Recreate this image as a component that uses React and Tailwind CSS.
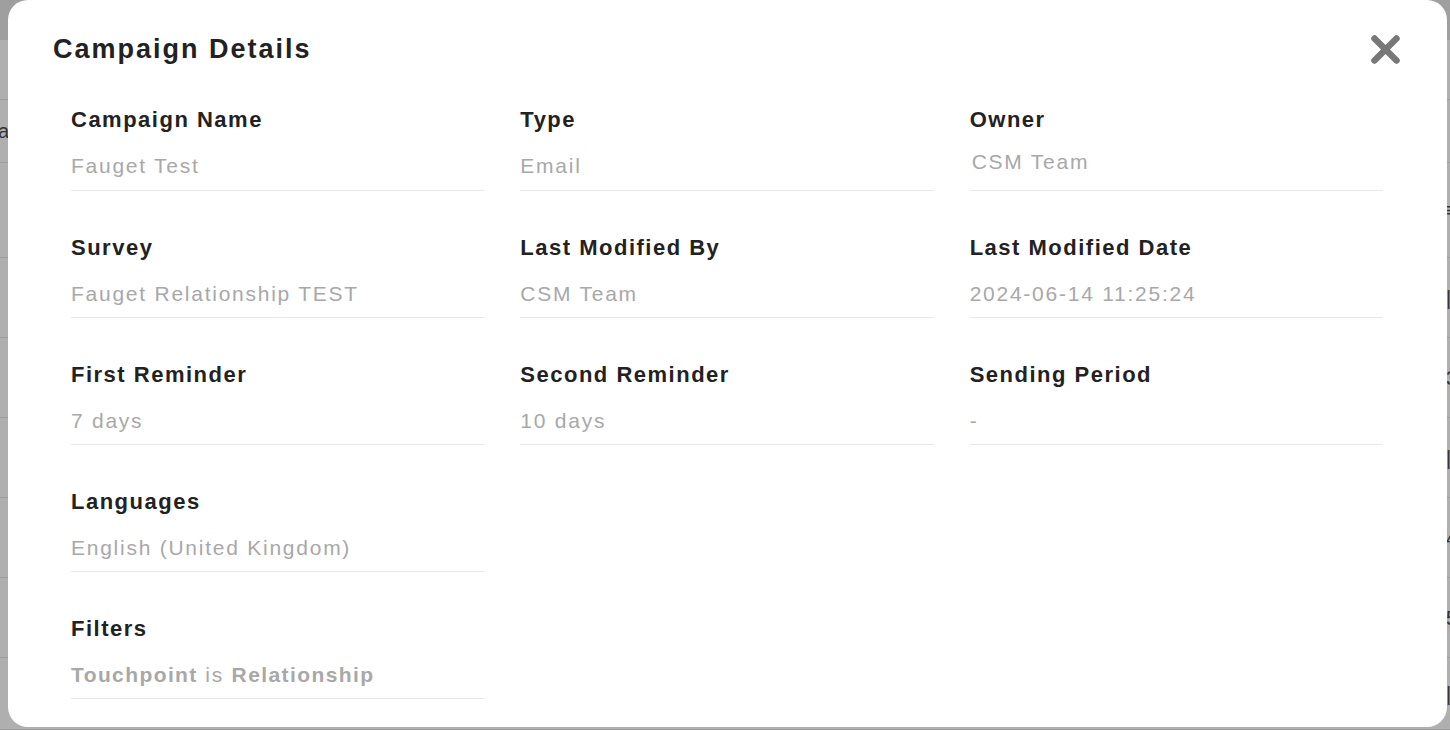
const fields = [
  { label: 'Campaign Name', value: 'Fauget Test' },
  { label: 'Type', value: 'Email' },
  { label: 'Owner', value: 'CSM Team', nudge: true },
  { label: 'Survey', value: 'Fauget Relationship TEST' },
  { label: 'Last Modified By', value: 'CSM Team' },
  { label: 'Last Modified Date', value: '2024-06-14 11:25:24' },
  { label: 'First Reminder', value: '7 days' },
  { label: 'Second Reminder', value: '10 days' },
  { label: 'Sending Period', value: '-' },
  { label: 'Languages', value: 'English (United Kingdom)' },
];

// rows of the page table that peeks out behind the dialog
const bgRows = [
  { h: 'h-[60px]', left: '', right: '' },
  { h: 'h-[63px]', left: 'pa', right: '' },
  { h: 'h-[95px]', left: '', right: '≡' },
  { h: 'h-[80px]', left: '', right: '|' },
  { h: 'h-[80px]', left: '', right: '3' },
  { h: 'h-[80px]', left: '', right: '|' },
  { h: 'h-[80px]', left: '', right: '4' },
  { h: 'h-[80px]', left: '', right: '5' },
  { h: 'h-[72px]', left: '', right: '|' },
];

function Field({ label, value, nudge }) {
  return (
    <div className="flex flex-col border-b border-[#e8e8e8] pb-[12px]">
      <div className="text-[22px] leading-[24px] font-bold tracking-[1.5px] text-[#222]">{label}</div>
      <div
        className={
          nudge
            ? 'mt-[18px] mb-[4px] pl-[2px] text-[21px] leading-[24px] tracking-[1.75px] text-[#a8a8a8]'
            : 'mt-[22px] -mb-[1px] text-[21px] leading-[24px] tracking-[1.75px] text-[#a8a8a8]'
        }
      >
        {value}
      </div>
    </div>
  );
}

export default function App() {
  return (
    <div
      className="relative h-[730px] w-full overflow-hidden bg-[#afafaf]"
      style={{ fontFamily: '"Liberation Sans", Arial, sans-serif' }}
    >
      {/* page behind the overlay */}
      <div className="flex flex-col">
        <div className="h-[40px] bg-[#9f9f9f]" />
        {bgRows.map((r, i) => (
          <div key={i} className={`${r.h} flex items-center justify-between border-b border-[#9d9d9d] text-[20px] text-[#333]`}>
            <span className="-ml-[13px] w-[21px] overflow-hidden whitespace-nowrap">{r.left}</span>
            <span className="w-[4px] overflow-hidden whitespace-nowrap">{r.right}</span>
          </div>
        ))}
      </div>

      {/* dialog */}
      <div className="absolute left-[8px] top-0 h-[727px] w-[1439px] rounded-[20px] bg-white px-[45px] pt-[33px]">
        <div className="flex h-[32px] items-center justify-between">
          <h2 className="text-[27px] leading-[32px] font-bold tracking-[2px] text-[#222]">Campaign Details</h2>
          <button className="mr-[1px] flex h-[31px] w-[31px] items-center justify-center" aria-label="Close">
            <svg width="31" height="31" viewBox="0 0 31 31" fill="none">
              <path d="M4.5 4.5L26.5 26.5M26.5 4.5L4.5 26.5" stroke="#787878" strokeWidth="6.5" strokeLinecap="round" />
            </svg>
          </button>
        </div>

        <div className="mt-[43px] grid grid-cols-3 gap-x-[36px] gap-y-[45px] pl-[18px] pr-[19px]">
          {fields.map((f) => (
            <Field key={f.label} {...f} />
          ))}
          <div className="col-start-1 flex flex-col border-b border-[#e8e8e8] pb-[12px]">
            <div className="text-[22px] leading-[24px] font-bold tracking-[1.5px] text-[#222]">Filters</div>
            <div className="mt-[22px] -mb-[1px] text-[21px] leading-[24px] tracking-[1.75px] text-[#a8a8a8]">
              <span className="font-bold tracking-[1.4px]">Touchpoint</span> is{' '}
              <span className="font-bold tracking-[1.4px]">Relationship</span>
            </div>
          </div>
        </div>
      </div>
    </div>
  );
}
